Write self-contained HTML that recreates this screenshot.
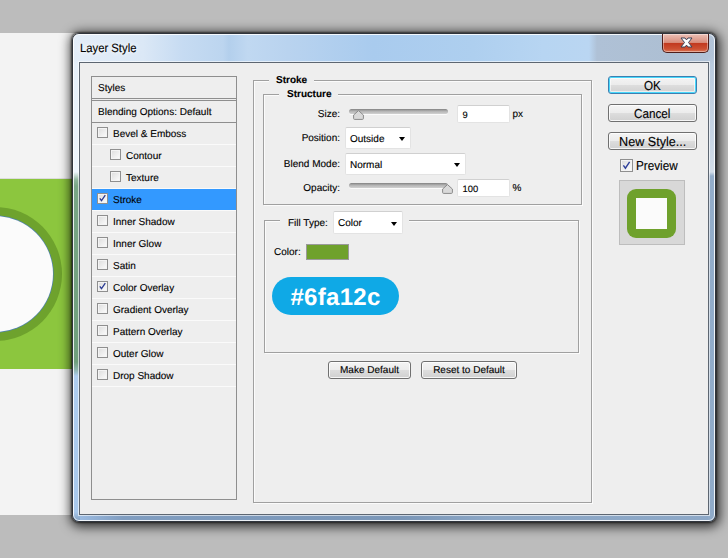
<!DOCTYPE html>
<html>
<head>
<meta charset="utf-8">
<title>Layer Style</title>
<style>
*{box-sizing:border-box;margin:0;padding:0}
html,body{width:728px;height:558px;overflow:hidden}
body{position:relative;background:#bcbcbc;font-family:"Liberation Sans",sans-serif;font-size:10px;color:#000;-webkit-text-stroke:.12px #000;text-rendering:geometricPrecision}
.abs{position:absolute}
/* canvas behind */
#doc{left:0;top:33px;width:80px;height:482px;background:#f3f3f3;overflow:hidden}
#band{left:0;top:146px;width:80px;height:190px;background:#8cc63e;box-shadow:0 -1px 0 #dcdcdc}
#ring{left:-72.5px;top:174px;width:134px;height:134px;border-radius:50%;background:#6ea22d}
#disc{left:-63.5px;top:183px;width:116px;height:116px;border-radius:50%;background:#fbfbfb;box-shadow:0 0 0 .7px rgba(70,120,215,.75)}
/* dialog */
#shadow{left:72px;top:33px;width:644px;height:489px;border-radius:7px;box-shadow:0 0 2px 1px rgba(0,0,0,.55),1px 2px 11px 3px rgba(0,0,0,.72)}
#frame{left:72px;top:33px;width:644px;height:489px;border-radius:7px;border:1px solid #2f343c;overflow:hidden;
 background:
 linear-gradient(180deg,rgba(0,0,0,0) 0,rgba(0,0,0,0) 26px,#e6f0fa 30px,#eef5fc 138px,#8fb59c 146px,#79a686 152px,#6f9f7c 328px,#8fb5b0 336px,#aecdf0 342px,#a8c8ec 478px,#8aa8c9 485px) 0 0/7px 100% no-repeat,
 linear-gradient(180deg,rgba(0,0,0,0) 0,rgba(0,0,0,0) 22px,#b9cadd 30px,#c6d4e4 100px,#d3deea 138px,#93adca 142px,#90abc9 487px) 100% 0/7px 100% no-repeat,
 linear-gradient(90deg,#9fbfe6 0,#809dc0 50px,#7b97b8 330px,#8ca7c6 420px,#8da8c7 100%) 0 100%/100% 8px no-repeat,
 linear-gradient(90deg,#e3edf8 0,#dbe8f6 70px,#c6dbf2 110px,#bcd5ef 150px,#b3cfec 156px,#c0d8f1 175px,#b9d3ef 215px,#a9cbee 300px,#aecfef 400px,#b7d5f2 470px,#bad6f2 516px,#afc1d6 524px,#adbfd3 600px,#b3c4d8 644px)}
#frame:before{content:"";position:absolute;left:0;top:0;right:0;bottom:0;border:1px solid rgba(255,255,255,.85);border-radius:6px}
#title{left:80px;top:41px;transform:scaleX(.94);transform-origin:0 50%;font-size:12px;line-height:14px;color:#000;white-space:nowrap;text-shadow:0 0 6px #fff,0 0 8px #fff}
#close{left:662px;top:34px;width:47px;height:19px;border-radius:0 0 5px 5px;border:1px solid #4f1e1a;border-top:0;
 background:linear-gradient(180deg,#ecc0b6 0,#d98e7d 47%,#c2391f 52%,#cd5133 84%,#db7858 100%);box-shadow:inset 0 0 0 1px rgba(255,255,255,.4)}
#client{left:79px;top:62px;width:630px;height:453px;background:#eeeeee;border:1px solid #5d6671;box-shadow:0 0 0 1px rgba(255,255,255,.6)}
/* sidebar */
#side{left:91px;top:76px;width:146px;height:424px;border:1px solid #8e8e8e;background:#eeeeee}
.row{position:absolute;left:92px;width:144px;height:22px;border-bottom:1px solid #fafafa;line-height:22px;white-space:nowrap}
.row span{position:absolute;left:21px;top:1px;font-size:10px}
.row.sub span{left:34px}
.cb{position:absolute;left:5px;top:4px;width:11px;height:11px;border:1px solid #8f8f8f;background:linear-gradient(135deg,#dcdcdc,#fdfdfd);box-shadow:inset 0 0 0 1px #f4f4f4}
.row.sub .cb{left:18px}
.hdr{position:absolute;left:92px;width:144px;line-height:23px;white-space:nowrap;padding-left:6px}
.t{display:inline-block}
.s9{transform:scaleX(.9);transform-origin:0 50%}
.tc{display:inline-block}
.tc.s9{transform-origin:50% 50%}
.tr{display:inline-block}
.sel{background:#3399ff}
/* group boxes */
.gb{position:absolute;border:1px solid #a0a0a0;box-shadow:inset 1px 1px 0 #fbfbfb,1px 1px 0 #fbfbfb}
.lg{position:absolute;background:#eeeeee;font-weight:bold;white-space:nowrap;line-height:13px}
.lbl{position:absolute;white-space:nowrap;line-height:13px;text-align:right}
.inp{position:absolute;background:#fff;border:1px solid #e3e3e3;border-top-color:#d0d0d0;border-radius:2px;line-height:17px;padding-left:6px;white-space:nowrap}
.arr{position:absolute;width:0;height:0;border-left:3.5px solid transparent;border-right:3.5px solid transparent;border-top:4px solid #000}
.track{position:absolute;height:5px;border-radius:3px;background:linear-gradient(180deg,#828282,#b4b4b4 45%,#d2d2d2);box-shadow:0 1px 0 #fbfbfb}
.thumb{position:absolute;width:11px;height:10px}
.ck{position:absolute;left:0;top:0}
.btn{position:absolute;border:1px solid #707070;border-radius:3px;background:linear-gradient(180deg,#f4f4f4 0,#ececec 48%,#dddddd 52%,#d0d0d0 100%);box-shadow:inset 0 0 0 1px rgba(255,255,255,.8);text-align:center;white-space:nowrap}
</style>
</head>
<body>
<!-- background document -->
<div id="doc" class="abs"><div id="band" class="abs"></div><div id="ring" class="abs"></div><div id="disc" class="abs"></div></div>

<!-- window -->
<div id="shadow" class="abs"></div>
<div id="frame" class="abs"></div>
<div id="title" class="abs">Layer Style</div>
<div id="close" class="abs"></div>
<svg class="abs" style="left:680px;top:37px" width="13" height="11" viewBox="0 0 13 11"><path d="M1 1h4l1.5 1.9L8 1h4L8.5 5.5 12 10H8L6.5 8.1 5 10H1l3.5-4.5z" fill="#fdfdfd" stroke="#3e4357" stroke-width="1" stroke-linejoin="round"/></svg>
<div id="client" class="abs"></div>

<!-- sidebar -->
<div id="side" class="abs"></div>
<div class="hdr" style="top:77px;height:22px;border-bottom:1px solid #8e8e8e"><span class="t">Styles</span></div>
<div class="hdr" style="top:100px;height:23px;border-top:1px solid #8e8e8e;border-bottom:1px solid #8e8e8e;line-height:23px"><span class="t">Blending Options: Default</span></div>
<div class="row" style="top:123px"><i class="cb"></i><span>Bevel &amp; Emboss</span></div>
<div class="row sub" style="top:145px"><i class="cb"></i><span>Contour</span></div>
<div class="row sub" style="top:167px"><i class="cb"></i><span>Texture</span></div>
<div class="row sel" style="top:189px"><i class="cb"><svg class="ck" width="9" height="9" viewBox="0 0 9 9"><path d="M1.8 4.3l1.7 2.4L7.3 1.2" fill="none" stroke="#2b3b93" stroke-width="1.3"/></svg></i><span>Stroke</span></div>
<div class="row" style="top:211px"><i class="cb"></i><span>Inner Shadow</span></div>
<div class="row" style="top:233px"><i class="cb"></i><span>Inner Glow</span></div>
<div class="row" style="top:255px"><i class="cb"></i><span>Satin</span></div>
<div class="row" style="top:277px"><i class="cb"><svg class="ck" width="9" height="9" viewBox="0 0 9 9"><path d="M1.8 4.3l1.7 2.4L7.3 1.2" fill="none" stroke="#2b3b93" stroke-width="1.3"/></svg></i><span>Color Overlay</span></div>
<div class="row" style="top:299px"><i class="cb"></i><span>Gradient Overlay</span></div>
<div class="row" style="top:321px"><i class="cb"></i><span>Pattern Overlay</span></div>
<div class="row" style="top:343px"><i class="cb"></i><span>Outer Glow</span></div>
<div class="row" style="top:365px"><i class="cb"></i><span>Drop Shadow</span></div>

<!-- main panel -->
<div class="gb" style="left:253px;top:80px;width:339px;height:423px"></div>
<div class="lg" style="left:269px;top:74px;padding:0 7px 0 7px"><span class="t">Stroke</span></div>
<div class="gb" style="left:263px;top:94px;width:319px;height:111px"></div>
<div class="lg" style="left:279px;top:88px;padding:0 7px 0 8px"><span class="t">Structure</span></div>

<div class="lbl" style="left:261px;width:79px;top:108px"><span class="tr">Size:</span></div>
<div class="track" style="left:349px;top:109px;width:99px"></div>
<svg class="thumb" style="left:353px;top:110px" viewBox="0 0 11 10"><path d="M5.5 .6L10.4 5v3.4q0 1-1 1H1.6q-1 0-1-1V5z" fill="#d9d9d9" stroke="#8a8a8a" stroke-width="1"/></svg>
<div class="inp" style="left:456.5px;top:105px;width:53px;height:18px;font-size:9.4px;padding-left:5px"><span class="t">9</span></div>
<div class="lbl" style="left:512.5px;top:108px"><span class="t">px</span></div>

<div class="lbl" style="left:261px;width:79px;top:132px"><span class="tr">Position:</span></div>
<div class="inp" style="left:345px;top:127px;width:66px;height:22px;line-height:23px;padding-left:4px"><span class="t">Outside</span></div>
<div class="arr" style="left:399px;top:137px"></div>

<div class="lbl" style="left:261px;width:79px;top:158px"><span class="tr">Blend Mode:</span></div>
<div class="inp" style="left:345px;top:153px;width:121px;height:22px;line-height:23px;padding-left:4px"><span class="t">Normal</span></div>
<div class="arr" style="left:454px;top:163px"></div>

<div class="lbl" style="left:261px;width:79px;top:182px"><span class="tr">Opacity:</span></div>
<div class="track" style="left:349px;top:183px;width:99px"></div>
<svg class="thumb" style="left:442px;top:184px" viewBox="0 0 11 10"><path d="M5.5 .6L10.4 5v3.4q0 1-1 1H1.6q-1 0-1-1V5z" fill="#d9d9d9" stroke="#8a8a8a" stroke-width="1"/></svg>
<div class="inp" style="left:456.5px;top:179px;width:53px;height:18px;font-size:9.4px;padding-left:5px"><span class="t">100</span></div>
<div class="lbl" style="left:512.5px;top:182px"><span class="t">%</span></div>

<div class="gb" style="left:264px;top:220px;width:315px;height:133px"></div>
<div class="lg" style="left:280px;top:214px;width:129px;height:14px;font-weight:normal;padding-left:8px;line-height:19px"><span class="t">Fill Type:</span></div>
<div class="inp" style="left:333px;top:211px;width:70px;height:23px;line-height:23px;padding-left:4px"><span class="t">Color</span></div>
<div class="arr" style="left:391px;top:222px"></div>

<div class="lbl" style="left:274px;top:246px"><span class="t">Color:</span></div>
<div class="abs" style="left:306px;top:244px;width:43px;height:16px;background:#6fa12c;border:1px solid #9a9a9a"></div>
<div class="abs" style="left:272px;top:277px;width:127px;height:38px;border-radius:19px;background:#0fa9e6;color:#fff;-webkit-text-stroke:0;font-weight:bold;font-size:24px;line-height:41px;text-align:center;letter-spacing:.3px">#6fa12c</div>

<div class="btn" style="left:328px;top:361px;width:83px;height:18px;line-height:17px"><span class="tc">Make Default</span></div>
<div class="btn" style="left:421px;top:361px;width:96px;height:18px;line-height:17px"><span class="tc">Reset to Default</span></div>

<!-- right column -->
<div class="btn" style="left:608px;top:76px;width:89px;height:18px;font-size:13px;line-height:17px;border-color:#3c7fb1;box-shadow:inset 0 0 0 1px #48d8fb,inset 0 0 0 2px rgba(255,255,255,.6)"><span class="tc s9">OK</span></div>
<div class="btn" style="left:608px;top:104px;width:89px;height:18px;font-size:13px;line-height:17px"><span class="tc s9">Cancel</span></div>
<div class="btn" style="left:608px;top:132px;width:89px;height:18px;font-size:13px;line-height:17px"><span class="tc s9" style="transform:scaleX(.97)">New Style...</span></div>
<i class="cb" style="left:620px;top:159px;width:13px;height:13px"><svg class="ck" width="11" height="11" viewBox="0 0 11 11"><path d="M2.4 5.4l2 2.8L8.6 1.8" fill="none" stroke="#2f409a" stroke-width="1.4"/></svg></i>
<div class="lbl" style="left:636px;top:158px;font-size:13px;line-height:15px"><span class="t s9">Preview</span></div>
<div class="abs" style="left:619px;top:180px;width:66px;height:65px;background:#d8d8d8;border:1px solid #bdbdbd"></div>
<div class="abs" style="left:627px;top:189px;width:49px;height:49px;border-radius:9px;background:#6fa12c"></div>
<div class="abs" style="left:636px;top:198px;width:31px;height:31px;background:#fbfbfb"></div>
</body>
</html>
